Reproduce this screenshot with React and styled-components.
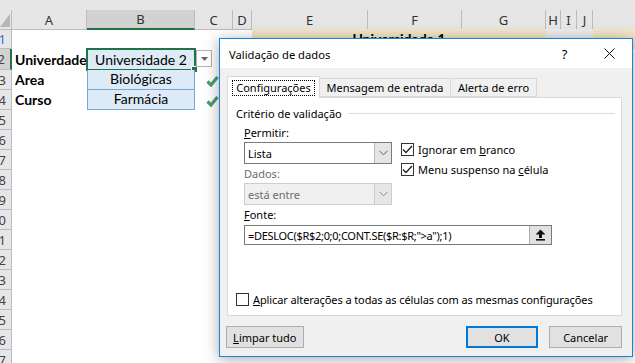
import React from 'react'
import styled, { createGlobalStyle } from 'styled-components'

const GlobalStyle = createGlobalStyle`
  html, body {
    margin: 0;
    padding: 0;
    background: #fff;
    overflow: hidden;
  }
  #root {
    position: relative;
    width: 635px;
    height: 363px;
    overflow: hidden;
  }
`

const GRID = '12px 75px 108px 38px 19px 116px 94px 84px 15px 16px 16px 1fr'
const LETTERS = ['A', 'B', 'C', 'D', 'E', 'F', 'G', 'H', 'I', 'J', '']

const Page = styled.div`
  width: 635px;
  height: 363px;
  font-family: Lato, "Liberation Sans", sans-serif;
  color: #000;
`

const TopStrip = styled.div`
  height: 10px;
  background: #e6e6e6;
`

const HeaderRow = styled.div`
  display: grid;
  grid-template-columns: ${GRID};
  height: 19px;
  background: #e6e6e6;
`

const Corner = styled.div`
  position: relative;
  border-right: 1px solid #bcbcbc;
  border-bottom: 1px solid #bcbcbc;
  svg { position: absolute; right: 1px; bottom: 2px; }
`

const ColHead = styled.div`
  display: flex;
  align-items: center;
  justify-content: center;
  font-family: "Noto Sans", sans-serif;
  font-size: 13px;
  color: #333;
  border-right: ${p => (p.$last ? 'none' : '1px solid #bcbcbc')};
  border-bottom: ${p => (p.$sel ? '2px solid #217346' : '1px solid #bcbcbc')};
  background: ${p => (p.$sel ? '#d2d2d2' : '#e6e6e6')};
`

const Row = styled.div`
  display: grid;
  grid-template-columns: ${GRID};
  height: ${p => p.$h || 20}px;
`

const RowHead = styled.div`
  display: flex;
  justify-content: flex-end;
  align-items: center;
  overflow: hidden;
  padding-right: 5px;
  font-family: "Noto Sans", sans-serif;
  font-size: 13px;
  white-space: nowrap;
  color: ${p => (p.$blue ? '#2f6fc9' : '#444')};
  background: ${p => (p.$sel ? '#d2d2d2' : '#e6e6e6')};
  border-bottom: 1px solid #bcbcbc;
  border-right: ${p => (p.$sel ? '2px solid #217346' : '1px solid #bcbcbc')};
`

const Cell = styled.div`
  position: relative;
  display: flex;
  align-items: flex-end;
  justify-content: ${p => (p.$center ? 'center' : 'flex-start')};
  padding: 0 3px 1px;
  font-size: 14px;
  font-weight: ${p => (p.$bold ? 700 : 400)};
  white-space: nowrap;
  overflow: visible;
  grid-column: ${p => p.$span || 'auto'};
  background: ${p => p.$fill || 'transparent'};
  border: ${p => (p.$framed ? '1px solid #7aa6dc' : 'none')};
  border-top: ${p => (p.$framed && p.$noTop ? 'none' : undefined)};
  line-height: 18px;
`

const Selection = styled.div`
  position: absolute;
  left: -1px;
  top: -1px;
  right: -1px;
  bottom: -1px;
  border: 2px solid #217346;
  pointer-events: none;
`

const FillHandle = styled.div`
  position: absolute;
  right: -4px;
  bottom: -4px;
  width: 5px;
  height: 5px;
  background: #217346;
  border: 1px solid #fff;
`

const DropButton = styled.div`
  position: absolute;
  left: 1px;
  top: 1px;
  width: 16px;
  height: 17px;
  box-sizing: border-box;
  border: 1px solid #b4b4b4;
  background: #fff;
  display: flex;
  align-items: center;
  justify-content: center;
`

const Check = styled.svg`
  position: absolute;
  left: 11px;
  top: 5px;
`

/* ---------- dialog ---------- */

const Dialog = styled.div`
  position: absolute;
  left: 219px;
  top: 38px;
  width: 414px;
  height: 319px;
  box-sizing: border-box;
  border: 1px solid #1883d7;
  background: #f0f0f0;
  box-shadow: 0 2px 14px rgba(0, 0, 0, 0.35);
  display: flex;
  flex-direction: column;
  font-family: "Noto Sans", sans-serif;
  font-size: 11px;
  color: #000;
`

const TitleBar = styled.div`
  height: 29px;
  background: #fff;
  display: flex;
  align-items: center;
  padding-left: 9px;
`

const Title = styled.div`
  flex: 1;
  font-size: 11.2px;
  padding-top: 1px;
`

const TitleIcon = styled.div`
  width: 45px;
  height: 29px;
  display: flex;
  align-items: center;
  justify-content: center;
  font-size: 13px;
`

const Body = styled.div`
  flex: 1;
  display: flex;
  flex-direction: column;
  padding: 8px 10px 10px 7px;
`

const Tabs = styled.div`
  display: flex;
  align-items: flex-end;
  height: 21px;
  position: relative;
  z-index: 1;
`

const Tab = styled.div`
  width: ${p => p.$w}px;
  height: ${p => (p.$active ? 22 : 19)}px;
  box-sizing: border-box;
  display: flex;
  align-items: center;
  justify-content: center;
  background: ${p => (p.$active ? '#fff' : '#f0f0f0')};
  border: 1px solid #d9d9d9;
  border-bottom: ${p => (p.$active ? 'none' : '1px solid #d9d9d9')};
  border-left: ${p => (p.$first || p.$active ? '1px solid #d9d9d9' : 'none')};
  margin-bottom: ${p => (p.$active ? -1 : 0)}px;
`

const FocusRing = styled.span`
  border: 1px dotted #000;
  padding: 0 3px;
  line-height: 14px;
`

const Panel = styled.div`
  height: 219px;
  box-sizing: border-box;
  background: #fff;
  border: 1px solid #d9d9d9;
  display: flex;
  flex-direction: column;
  padding: 7px 6px 8px 8px;
`

const GroupHeader = styled.div`
  display: flex;
  align-items: center;
  gap: 6px;
  height: 16px;
  &::after {
    content: '';
    flex: 1;
    height: 1px;
    background: #dcdcdc;
  }
`

const Fields = styled.div`
  display: flex;
  gap: 9px;
  padding-left: 8px;
  margin-top: 4px;
`

const FieldCol = styled.div`
  display: flex;
  flex-direction: column;
`

const Label = styled.div`
  height: 16px;
  line-height: 16px;
  margin-top: ${p => p.$gap || 0}px;
  color: ${p => (p.$dim ? '#6d6d6d' : '#000')};
`

const Select = styled.div`
  width: 148px;
  height: 22px;
  margin-top: 1px;
  box-sizing: border-box;
  display: flex;
  border: 1px solid ${p => (p.$disabled ? '#cccccc' : '#7a7a7a')};
  background: ${p => (p.$disabled ? '#f0f0f0' : '#fff')};
  color: ${p => (p.$disabled ? '#6d6d6d' : '#000')};
`

const SelectValue = styled.div`
  flex: 1;
  display: flex;
  align-items: center;
  padding-left: 3px;
`

const SelectArrow = styled.div`
  width: 16px;
  display: flex;
  align-items: center;
  justify-content: center;
  background: ${p => (p.$disabled ? '#e6e6e6' : '#e5e5e5')};
  border-left: 1px solid ${p => (p.$disabled ? '#cccccc' : '#b9b9b9')};
`

const Checks = styled.div`
  display: flex;
  flex-direction: column;
  gap: 7px;
  margin-top: 18px;
`

const CheckRow = styled.div`
  display: flex;
  align-items: center;
  gap: 4px;
  height: 13px;
`

const Box = styled.span`
  width: 13px;
  height: 13px;
  flex: none;
  box-sizing: border-box;
  border: 1px solid #333;
  background: #fff;
  display: flex;
  align-items: center;
  justify-content: center;
`

const SourceBlock = styled.div`
  padding-left: 8px;
  display: flex;
  flex-direction: column;
`

const Input = styled.div`
  width: 308px;
  height: 20px;
  margin-top: 2px;
  box-sizing: border-box;
  border: 1px solid #7a7a7a;
  display: flex;
`

const InputText = styled.div`
  flex: 1;
  display: flex;
  align-items: center;
  padding-left: 3px;
  letter-spacing: -0.3px;
`

const RefButton = styled.div`
  width: 21px;
  display: flex;
  align-items: center;
  justify-content: center;
  background: #e1e1e1;
  border-left: 1px solid #adadad;
`

const ApplyRow = styled(CheckRow)`
  margin-top: auto;
  margin-bottom: 1px;
  span:last-child { letter-spacing: -0.1px; }
`

const Footer = styled.div`
  display: flex;
  align-items: center;
  gap: 11px;
  margin-top: 10px;
`

const Button = styled.div`
  width: ${p => p.$w || 73}px;
  height: 22px;
  box-sizing: border-box;
  display: flex;
  align-items: center;
  justify-content: center;
  background: #e1e1e1;
  border: ${p => (p.$primary ? '2px solid #0078d7' : '1px solid #adadad')};
  margin-left: ${p => p.$ml || 0}px;
`

const Chevron = ({ color = '#606060' }) => (
  <svg width="9" height="6" viewBox="0 0 9 6">
    <polyline points="0.5,0.8 4.5,4.8 8.5,0.8" fill="none" stroke={color} strokeWidth="1" />
  </svg>
)

const Tick = () => (
  <svg width="11" height="9" viewBox="0 0 11 9">
    <polyline points="1,4.5 4,7.5 10,1" fill="none" stroke="#222" strokeWidth="1.3" />
  </svg>
)

const GreenCheck = () => (
  <Check width="13" height="12" viewBox="0 0 13 12">
    <polyline points="1.5,6.5 5,10 11.5,2" fill="none" stroke="#4f9b70" strokeWidth="3.2" strokeLinejoin="miter" />
  </Check>
)

const emptyRows = [5, 6, 7, 8, 9, 10, 11, 12, 13, 14, 15, 16, 17]

export default function App() {
  return (
    <Page>
      <GlobalStyle />
      <TopStrip />
      <HeaderRow>
        <Corner>
          <svg width="10" height="13" viewBox="0 0 10 13">
            <polygon points="10,0 10,13 0,13" fill="#b5b5b5" />
          </svg>
        </Corner>
        {LETTERS.map((l, i) => (
          <ColHead key={i} $sel={l === 'B'} $last={l === ''}>{l}</ColHead>
        ))}
      </HeaderRow>

      <Row>
        <RowHead $blue>1</RowHead>
        <Cell $span="2 / 6" />
        <Cell $span="6 / 9" $fill="#f3e6c9" $center $bold>Universidade 1</Cell>
        <Cell $span="9 / 12" $fill="#eeeeee" />
        <Cell $fill="#f3e6c9" />
      </Row>
      <Row $h={21}>
        <RowHead $sel>2</RowHead>
        <Cell $bold>Univerdade</Cell>
        <Cell $center $fill="#ddebf7">
          Universidade 2
          <Selection>
            <FillHandle />
          </Selection>
        </Cell>
        <Cell>
          <DropButton>
            <svg width="7" height="4" viewBox="0 0 7 4">
              <polygon points="0,0 7,0 3.5,4" fill="#666" />
            </svg>
          </DropButton>
        </Cell>
      </Row>
      <Row>
        <RowHead>3</RowHead>
        <Cell $bold>Area</Cell>
        <Cell $center $fill="#ddebf7" $framed $noTop>Biológicas</Cell>
        <Cell><GreenCheck /></Cell>
      </Row>
      <Row>
        <RowHead>4</RowHead>
        <Cell $bold>Curso</Cell>
        <Cell $center $fill="#ddebf7" $framed $noTop>Farmácia</Cell>
        <Cell><GreenCheck /></Cell>
      </Row>
      {emptyRows.map(n => (
        <Row key={n}>
          <RowHead>{n}</RowHead>
        </Row>
      ))}

      <Dialog>
        <TitleBar>
          <Title>Validação de dados</Title>
          <TitleIcon>?</TitleIcon>
          <TitleIcon>
            <svg width="11" height="11" viewBox="0 0 11 11">
              <path d="M0.5 0.5 L10.5 10.5 M10.5 0.5 L0.5 10.5" stroke="#111" strokeWidth="1" />
            </svg>
          </TitleIcon>
        </TitleBar>
        <Body>
          <Tabs>
            <Tab $active $first $w={93}><FocusRing>Configurações</FocusRing></Tab>
            <Tab $w={131}>Mensagem de entrada</Tab>
            <Tab $w={86}>Alerta de erro</Tab>
          </Tabs>
          <Panel>
            <GroupHeader>Critério de validação</GroupHeader>
            <Fields>
              <FieldCol>
                <Label><u>P</u>ermitir:</Label>
                <Select>
                  <SelectValue>Lista</SelectValue>
                  <SelectArrow><Chevron /></SelectArrow>
                </Select>
                <Label $dim $gap={2}>Dados:</Label>
                <Select $disabled>
                  <SelectValue>está entre</SelectValue>
                  <SelectArrow $disabled><Chevron color="#8a8a8a" /></SelectArrow>
                </Select>
              </FieldCol>
              <Checks>
                <CheckRow><Box><Tick /></Box><span>Ignorar em <u>b</u>ranco</span></CheckRow>
                <CheckRow><Box><Tick /></Box><span>Menu suspenso na <u>c</u>élula</span></CheckRow>
              </Checks>
            </Fields>
            <SourceBlock>
              <Label $gap={2}><u>F</u>onte:</Label>
              <Input>
                <InputText>=DESLOC($R$2;0;0;CONT.SE($R:$R;"&gt;a");1)</InputText>
                <RefButton>
                  <svg width="11" height="12" viewBox="0 0 11 12">
                    <polygon points="5.5,0.5 10.5,5.5 7,5.5 7,9 4,9 4,5.5 0.5,5.5" fill="#111" />
                    <rect x="1" y="10" width="9" height="1.6" fill="#111" />
                  </svg>
                </RefButton>
              </Input>
            </SourceBlock>
            <ApplyRow><Box /><span><u>A</u>plicar alterações a todas as células com as mesmas configurações</span></ApplyRow>
          </Panel>
          <Footer>
            <Button $w={78} $ml={-1}><u>L</u>impar tudo</Button>
            <Button $primary $ml={151}>OK</Button>
            <Button>Cancelar</Button>
          </Footer>
        </Body>
      </Dialog>
    </Page>
  )
}
